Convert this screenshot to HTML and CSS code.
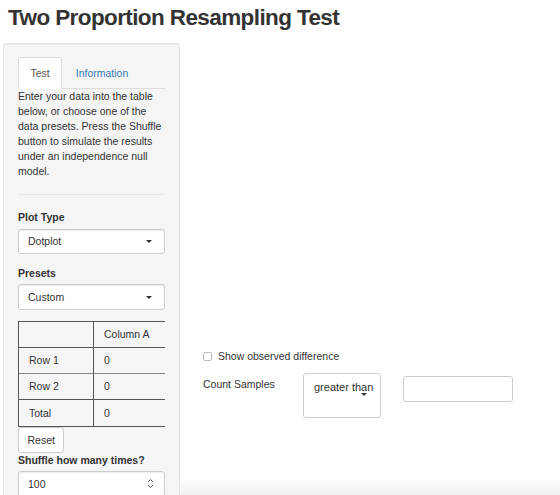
FILE: index.html
```html
<!DOCTYPE html>
<html lang="en">
  <head>
    <meta charset="UTF-8" />
    <title>Two Proportion Resampling Test</title>
    <link rel="stylesheet" href="styles.css">
  </head>
  <body>
    <h2 class="title">Two Proportion Resampling Test</h2>
    <div class="layout">
      <div class="well">
        <ul class="tabs">
          <li class="tab active">Test</li>
          <li class="tab">Information</li>
        </ul>
        <p class="intro">Enter your data into the table below, or choose one of the data presets. Press the Shuffle button to simulate the results under an independence null model.</p>
        <hr class="rule">

        <div class="group">
          <label class="lbl">Plot Type</label>
          <div class="select">Dotplot <span class="caret"></span></div>
        </div>
        <div class="group">
          <label class="lbl">Presets</label>
          <div class="select">Custom <span class="caret"></span></div>
        </div>

        <table class="grid">
          <tr><td class="first"></td><td>Column A</td></tr>
          <tr><td class="first">Row 1</td><td>0</td></tr>
          <tr class="soft"><td class="first">Row 2</td><td>0</td></tr>
          <tr><td class="first">Total</td><td>0</td></tr>
        </table>
        <div class="btn">Reset</div>

        <label class="lbl">Shuffle how many times?</label>
        <div class="select num">100
          <svg class="spin" width="7" height="11" viewBox="0 0 7 11">
            <path d="M1 4 L3.5 1.5 L6 4 M1 7 L3.5 9.5 L6 7" fill="none" stroke="#555" stroke-width="1"/>
          </svg>
        </div>
      </div>

      <div class="main">
        <div class="plot"></div>
        <div class="controls">
          <label class="check"><span class="box"></span>Show observed difference</label>
          <div class="count">
            <span class="count-lbl">Count Samples</span>
            <div class="dir">greater than<span class="caret"></span></div>
            <div class="field"></div>
          </div>
        </div>
        <div class="shade"></div>
      </div>
    </div>
  </body>
</html>
```

FILE: styles.css
```css
* {
  box-sizing: border-box;
}
html, body {
  height: 100%;
  overflow: hidden;
}
body {
  margin: 0;
  padding: 0 0 0 3px;
  font-family: 'Liberation Sans', Arial, sans-serif;
  font-size: 10.5px;
  line-height: 15px;
  color: #333;
  background: #fff;
}
.title {
  margin: 5px 0 13px 5px;
  font-size: 22.5px;
  line-height: 25px;
  font-weight: 700;
  color: #333;
  letter-spacing: -0.6px;
}
.layout {
  display: flex;
  align-items: flex-start;
}

/* sidebar */
.well {
  width: 177px;
  flex: none;
  padding: 13px 14px 20px 14px;
  background: #f5f5f5;
  border: 1px solid #e3e3e3;
  border-radius: 3px;
  box-shadow: inset 0 1px 1px rgba(0, 0, 0, 0.05);
}
.tabs {
  display: flex;
  margin: 0;
  padding: 0;
  list-style: none;
  border-bottom: 1px solid #ddd;
}
.tab {
  padding: 7.5px 11px 7.5px 11.5px;
  margin-right: 1.5px;
  margin-bottom: -1px;
  border: 1px solid transparent;
  border-radius: 3px 3px 0 0;
  color: #337ab7;
}
.tab.active {
  background: #fff;
  color: #555;
  border-color: #ddd;
  border-bottom-color: #fff;
}
.intro {
  margin: 0 0 7.5px;
}
.rule {
  margin: 15px 0;
  border: 0;
  border-top: 1px solid #e8e8e8;
}
.group {
  margin-bottom: 11.25px;
}
.lbl {
  display: block;
  font-weight: 700;
  margin-bottom: 3.75px;
}
.select {
  position: relative;
  height: 25.5px;
  padding: 4.5px 9px;
  background: #fff;
  border: 1px solid #ccc;
  border-radius: 3px;
  box-shadow: inset 0 1px 1px rgba(0, 0, 0, 0.075);
}
.select .caret {
  position: absolute;
  right: 12px;
  top: 10.5px;
}
.caret {
  display: inline-block;
  width: 0;
  height: 0;
  border-top: 3.5px solid #333;
  border-left: 3.5px solid transparent;
  border-right: 3.5px solid transparent;
}
.num .spin {
  position: absolute;
  right: 10px;
  top: 6px;
}

.grid {
  width: 147px;
  border-collapse: collapse;
}
.grid td {
  height: 26px;
  padding: 0 10px;
  border-top: 1px solid #555;
  white-space: nowrap;
}
.grid td.first {
  width: 75px;
  padding-left: 10px;
  border-left: 1px solid #555;
  border-right: 1px solid #555;
}
.grid tr:last-child td {
  border-bottom: 1px solid #555;
  height: 27px;
}
.grid tr.soft td {
  border-top-color: #888;
}
.btn {
  display: inline-block;
  height: 25.5px;
  padding: 4.5px 8.5px;
  background: #fff;
  border: 1px solid #ccc;
  border-radius: 3px;
  color: #333;
}

/* main panel */
.main {
  flex: 1;
  display: flex;
  flex-direction: column;
  height: 452px;
}
.plot {
  height: 306px;
}
.controls {
  padding-left: 23px;
}
.check {
  display: flex;
  align-items: center;
  height: 15px;
}
.box {
  width: 9px;
  height: 9px;
  margin-right: 6px;
  border: 1px solid #bbb;
  border-radius: 2px;
  background: #fff;
}
.count {
  display: flex;
  align-items: flex-start;
  margin-top: 9px;
}
.count-lbl {
  width: 100px;
  padding-top: 4px;
}
.dir {
  width: 78px;
  height: 45px;
  padding: 7px 0 0 10px;
  border: 1px solid #ccc;
  border-radius: 3px;
  line-height: 13px;
  font-size: 11px;
}
.dir .caret {
  display: block;
  margin: -1px 0 0 47px;
}
.field {
  width: 110px;
  height: 25.5px;
  margin: 3px 0 0 22px;
  border: 1px solid #ccc;
  border-radius: 3px;
}
.shade {
  margin-top: auto;
  height: 17px;
  background: linear-gradient(#fff, #f0f0f0);
}
```
